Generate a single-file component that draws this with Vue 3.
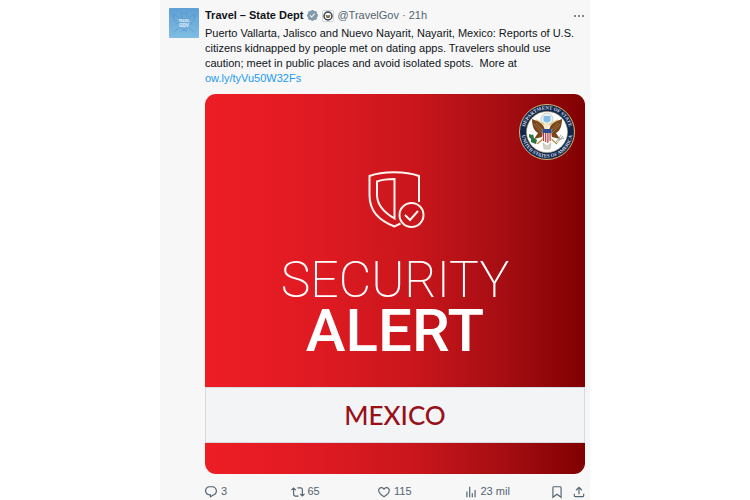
<template>
  <main class="page">
    <article class="post">
      <a href="#" class="avatar" aria-label="Travel - State Dept">
        <svg viewBox="0 0 30 30">
          <defs>
            <linearGradient id="avatarSky" x1="0" y1="0" x2="0" y2="1">
              <stop offset="0" stop-color="#5f9fd3" />
              <stop offset="1" stop-color="#7fbde2" />
            </linearGradient>
          </defs>
          <rect width="30" height="30" rx="1" fill="url(#avatarSky)" />
          <g fill="none" stroke="#4f8fc4" stroke-width="1" opacity="0.45">
            <circle cx="15" cy="8" r="3" />
            <path d="M12 13C9 8 6 7 4 6c0 5 2 9 7 11M18 13c3-5 6-6 8-7 0 5-2 9-7 11" />
            <path d="M11 12h8v7l-4 4-4-4zM10 20l-5 4M20 20l5 4M12 24l3-3 3 3" />
          </g>
          <text x="15" y="14" text-anchor="middle" font-size="3" class="avatar-text">TRAVEL</text>
          <text x="15" y="19" text-anchor="middle" font-size="5" class="avatar-text">GOV</text>
        </svg>
      </a>

      <div class="content">
        <header class="head">
          <a href="#" class="name">Travel – State Dept</a>
          <svg class="verified" viewBox="0 0 24 24" aria-hidden="true">
            <path :d="icons.verified" />
          </svg>
          <svg class="affiliate" viewBox="0 0 12 12" aria-hidden="true">
            <rect x="0.5" y="0.5" width="11" height="11" rx="1" fill="#fff" stroke="#cfd5d9" />
            <circle cx="6" cy="6" r="4" fill="#fff" stroke="#333b47" stroke-width="1.5" />
            <path d="M3.5 4.5 6 5.5l2.5-1L7.5 8h-3z" fill="#87704c" />
          </svg>
          <a href="#" class="handle">@TravelGov</a>
          <span class="time">· 21h</span>
          <button type="button" class="more" aria-label="More">
            <svg viewBox="0 0 12 12">
              <circle cx="2" cy="6" r="1" />
              <circle cx="6" cy="6" r="1" />
              <circle cx="10" cy="6" r="1" />
            </svg>
          </button>
        </header>

        <p class="text">{{ message }}
          <a href="#">ow.ly/tyVu50W32Fs</a></p>

        <section class="alert">
          <svg class="seal" viewBox="0 0 56 56" role="img" aria-label="Department of State seal">
            <defs>
              <path id="ringTop" d="M5.5 28a22.5 22.5 0 0 1 45 0" />
              <path id="ringBottom" d="M2.5 28a25.5 25.5 0 0 0 51 0" />
            </defs>
            <circle cx="28" cy="28" r="27.5" fill="#12284b" stroke="#d9b878" stroke-width="1" />
            <circle cx="28" cy="28" r="20.5" fill="#fff" stroke="#b9a77c" stroke-width="0.6" />
            <text class="ring-text"><textPath href="#ringTop" startOffset="50%" text-anchor="middle">DEPARTMENT OF STATE</textPath></text>
            <text class="ring-text"><textPath href="#ringBottom" startOffset="50%" text-anchor="middle">UNITED STATES OF AMERICA</textPath></text>
            <circle cx="28" cy="15" r="6" fill="#e8f2f8" stroke="#c9c2aa" stroke-width="0.8" />
            <path d="M24.5 12h7v5l-3.5 2-3.5-2z" fill="#83bfe5" />
            <path d="M17 16l9 5M39 16l-9 5" stroke="#dfca83" stroke-width="1.6" />
            <path d="M25 23c-2-4-7-6-12-8 0 7 2 12 6 14l-4 6 8-2 3-7zM31 23c2-4 7-6 12-8 0 7-2 12-6 14l4 6-8-2-3-7z" fill="#77461f" />
            <path d="M15 20l8 9M17 19l7 8M41 20l-8 9M39 19l-7 8" stroke="#b58245" stroke-width="0.7" />
            <path d="M25 20c1-2 4-2 5 0l-1 5h-3z" fill="#f2e7c6" />
            <path d="M25 34l-7 6M31 34l7 6" stroke="#c38c38" stroke-width="1.4" />
            <path d="M10 30l3 1 1-1 1 4 3 2-1 4-3-1-2-1 0-3-2-2z" fill="#2c7543" />
            <path d="M38 39l6-7M37 38l5-7M39 36l6-2" stroke="#a5a99f" stroke-width="1" />
            <path d="M24 39l4 3 4-3-1 6h-6z" fill="#d5d5ca" stroke="#aaa895" stroke-width="0.5" />
            <path d="M23.5 25h9v12L28 40l-4.5-3z" fill="#fff" />
            <path d="M24.5 29v8M26.7 29v9M28.9 29v10M31.1 29v8" stroke="#b9333b" stroke-width="1.2" />
            <path d="M23.5 25h9v4h-9z" fill="#294b91" />
          </svg>

          <div class="alert-main">
            <svg class="shield" viewBox="-3 0 60 60" aria-hidden="true">
              <path d="M51 33V7C38 2 14 2 1.5 7v19c0 16 9 25 25 31.5l6-3" />
              <path d="M26.5 10c-7 0-12 .5-17.5 2.5V26c0 11 8 18 17.5 23.5z" />
              <circle cx="43.5" cy="46" r="12" />
              <path d="M37 46l5 5 8-9" />
            </svg>
            <h1>
              <span class="thin">SECURITY</span>
              <span class="strong">ALERT</span>
            </h1>
          </div>
          <div class="country">MEXICO</div>
        </section>

        <footer class="actions">
          <button v-for="a in actions" :key="a.label" type="button" :aria-label="a.label">
            <svg viewBox="0 0 24 24"><path :d="icons[a.icon]" /></svg>
            <span v-if="a.count">{{ a.count }}</span>
          </button>
        </footer>
      </div>
    </article>
  </main>
</template>

<script setup>
const message = 'Puerto Vallarta, Jalisco and Nuevo Nayarit, Nayarit, Mexico: Reports of U.S. citizens kidnapped by people met on dating apps. Travelers should use caution; meet in public places and avoid isolated spots. \u00a0More at'

const actions = [
  { icon: 'reply', label: 'Reply', count: '3' },
  { icon: 'repost', label: 'Repost', count: '65' },
  { icon: 'like', label: 'Like', count: '115' },
  { icon: 'views', label: 'Views', count: '23 mil' },
  { icon: 'bookmark', label: 'Bookmark' },
  { icon: 'share', label: 'Share' }
]

const icons = {
  verified: 'M22.25 12c0-1.43-.88-2.67-2.19-3.34.46-1.39.2-2.9-.81-3.91s-2.52-1.27-3.91-.81c-.66-1.31-1.91-2.19-3.34-2.19s-2.67.88-3.33 2.19c-1.4-.46-2.91-.2-3.92.81s-1.26 2.52-.8 3.91c-1.31.67-2.2 1.91-2.2 3.34s.89 2.67 2.2 3.34c-.46 1.39-.21 2.9.8 3.91s2.52 1.26 3.91.81c.67 1.31 1.91 2.19 3.34 2.19s2.68-.88 3.34-2.19c1.39.45 2.9.2 3.91-.81s1.27-2.52.81-3.91c1.31-.67 2.19-1.91 2.19-3.34zm-11.71 4.2L6.8 12.46l1.41-1.42 2.26 2.26 4.8-5.23 1.47 1.36-6.2 6.77z',
  reply: 'M1.751 10c0-4.42 3.584-8 8.005-8h4.366c4.49 0 8.129 3.64 8.129 8.13 0 2.96-1.607 5.68-4.196 7.11l-8.054 4.46v-3.69h-.067c-4.49.1-8.183-3.51-8.183-8.01zm8.005-6c-3.317 0-6.005 2.69-6.005 6 0 3.37 2.77 6.08 6.138 6.01l.351-.01h1.761v2.3l5.087-2.81c1.951-1.08 3.163-3.13 3.163-5.36 0-3.39-2.744-6.13-6.129-6.13H9.756z',
  repost: 'M4.5 3.88l4.432 4.14-1.364 1.46L5.5 7.55V16c0 1.1.896 2 2 2H13v2H7.5c-2.209 0-4-1.79-4-4V7.55L1.432 9.48.068 8.02 4.5 3.88zM16.5 6H11V4h5.5c2.209 0 4 1.79 4 4v8.45l2.068-1.93 1.364 1.46-4.432 4.14-4.432-4.14 1.364-1.46 2.068 1.93V8c0-1.1-.896-2-2-2z',
  like: 'M16.697 5.5c-1.222-.06-2.679.51-3.89 2.16l-.805 1.09-.806-1.09C9.984 6.01 8.526 5.44 7.304 5.5c-1.243.07-2.349.78-2.91 1.91-.552 1.12-.633 2.78.479 4.82 1.074 1.97 3.257 4.27 7.129 6.61 3.87-2.34 6.052-4.64 7.126-6.61 1.111-2.04 1.03-3.7.477-4.82-.561-1.13-1.666-1.84-2.908-1.91zm4.187 7.69c-1.351 2.48-4.001 5.12-8.379 7.67l-.503.3-.504-.3c-4.379-2.55-7.029-5.19-8.382-7.67-1.36-2.5-1.41-4.86-.514-6.67.887-1.79 2.647-2.91 4.601-3.01 1.651-.09 3.368.56 4.798 2.01 1.429-1.45 3.146-2.1 4.796-2.01 1.954.1 3.714 1.22 4.601 3.01.896 1.81.846 4.17-.514 6.67z',
  views: 'M8.75 21V3h2v18h-2zM18 21V8.5h2V21h-2zM4 21l.004-10h2L6 21H4zm9.248 0v-7h2v7h-2z',
  bookmark: 'M4 4.5C4 3.12 5.119 2 6.5 2h11C18.881 2 20 3.12 20 4.5v18.44l-8-5.71-8 5.71V4.5zM6.5 4c-.276 0-.5.22-.5.5v14.56l6-4.29 6 4.29V4.5c0-.28-.224-.5-.5-.5h-11z',
  share: 'M12 2.59l5.7 5.7-1.41 1.42L13 6.41V16h-2V6.41l-3.3 3.3-1.41-1.42L12 2.59zM21 15l-.02 3.51c0 1.38-1.12 2.49-2.5 2.49H5.5C4.11 21 3 19.88 3 18.5V15h2v3.5c0 .28.22.5.5.5h12.98c.28 0 .5-.22.5-.5L19 15h2z'
}
</script>

<style>
body {
  margin: 0;
  background: #fff;
}
</style>

<style scoped>
.page {
  display: flex;
  justify-content: center;
  min-height: 100vh;
  font-family: "Liberation Sans", Arial, sans-serif;
  font-size: 11px;
  line-height: 15px;
  color: #0f1419;
}

.post {
  box-sizing: border-box;
  display: flex;
  gap: 6px;
  width: 100%;
  max-width: 430px;
  padding: 8px 5px 0 9px;
  background: #f7f7f7;
}

.avatar {
  flex: none;
  width: 30px;
  height: 30px;
}

svg {
  display: block;
}

.avatar-text {
  font-family: Roboto, sans-serif;
  font-weight: 700;
  fill: #eaf5fc;
}

.content {
  flex: 1;
  min-width: 0;
}

.head {
  display: flex;
  align-items: center;
  gap: 3px;
  height: 15px;
}

.name {
  font-weight: 700;
  color: inherit;
  text-decoration: none;
}

.verified {
  width: 13px;
  height: 13px;
  fill: #829aab;
}

.affiliate {
  width: 12px;
  height: 12px;
}

.handle,
.time {
  color: #536471;
  text-decoration: none;
}

button {
  display: flex;
  align-items: center;
  padding: 0;
  border: 0;
  background: none;
  color: #536471;
  font: inherit;
  cursor: pointer;
}

.more {
  margin-left: auto;
}

.more svg {
  width: 12px;
  height: 12px;
  fill: #536471;
}

.text {
  margin: 3px 0 8px;
}

.text a {
  color: #1d9bf0;
  text-decoration: none;
}

.alert {
  position: relative;
  display: flex;
  flex-direction: column;
  box-sizing: border-box;
  aspect-ratio: 1;
  padding-bottom: 31px;
  border-radius: 11px;
  overflow: hidden;
  background: linear-gradient(90deg, #ee1d25 0%, #df1a22 30%, #c9161c 55%, #a30d12 80%, #800000 100%);
}

/* official seal over the top right corner */
.seal {
  position: absolute;
  top: 10px;
  right: 10px;
  width: 56px;
  height: 56px;
}

.ring-text {
  font-family: "Liberation Serif", serif;
  font-size: 5px;
  font-weight: 700;
  fill: #d5dce5;
}

.alert-main {
  flex: 1;
  display: flex;
  flex-direction: column;
  align-items: center;
  padding-top: 75px;
}

.shield {
  width: 60px;
  height: 60px;
  fill: none;
  stroke: #fff6f0;
  stroke-width: 2;
}

h1 {
  margin: 26px 0 0;
  color: #fff;
  font-family: Roboto, "Liberation Sans", sans-serif;
  text-align: center;
}

h1 span {
  display: block;
}

.thin {
  font-size: 50px;
  font-weight: 200;
  line-height: 50px;
}

.strong {
  font-size: 60px;
  font-weight: 500;
  line-height: 52px;
}

.country {
  height: 56px;
  box-sizing: border-box;
  border: 1px solid #d3dbe0;
  background: #f2f4f6;
  color: #98101a;
  font-family: Lato, sans-serif;
  font-size: 26px;
  font-weight: 500;
  line-height: 54px;
  text-align: center;
}

.actions {
  display: grid;
  grid-template-columns: repeat(4, 1fr) 22px 13px;
  margin: 10px 0 0 -1px;
}

.actions button {
  gap: 3px;
  line-height: 15px;
}

.actions svg {
  width: 14px;
  height: 14px;
  flex: none;
  fill: #536471;
}
</style>
